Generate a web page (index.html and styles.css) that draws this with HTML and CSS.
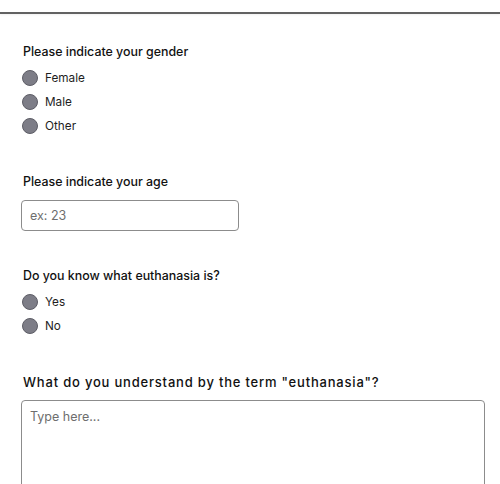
FILE: index.html
```html
<!DOCTYPE html>
<html>
<head>
<meta charset="utf-8">
<link rel="stylesheet" href="styles.css">
</head>
<body>
<div class="topbar"></div>
<form class="survey">
  <section class="question">
    <h2 class="q-title">Please indicate your gender</h2>
    <div class="options">
      <label class="option"><input type="radio" name="gender"><span>Female</span></label>
      <label class="option"><input type="radio" name="gender"><span>Male</span></label>
      <label class="option"><input type="radio" name="gender"><span>Other</span></label>
    </div>
  </section>
  <section class="question">
    <h2 class="q-title">Please indicate your age</h2>
    <input class="text-input" type="text" placeholder="ex: 23">
  </section>
  <section class="question">
    <h2 class="q-title">Do you know what euthanasia is?</h2>
    <div class="options">
      <label class="option"><input type="radio" name="know"><span>Yes</span></label>
      <label class="option"><input type="radio" name="know"><span>No</span></label>
    </div>
  </section>
  <section class="question">
    <h2 class="q-title q-title-wide">What do you understand by the term "euthanasia"?</h2>
    <textarea class="text-area" placeholder="Type here..."></textarea>
  </section>
</form>
</body>
</html>
```

FILE: styles.css
```css
html, body {
  margin: 0;
  padding: 0;
  background: #ffffff;
  font-family: Inter, "Liberation Sans", sans-serif;
  color: #161616;
}
.topbar {
  height: 12px;
  border-bottom: 2px solid #626262;
  box-shadow: 0 1px 2px rgba(0, 0, 0, 0.06);
}
.survey {
  display: flex;
  flex-direction: column;
  gap: 34px;
  padding: 28px 15px 0 21px;
}
.question {
  display: flex;
  flex-direction: column;
}
.q-title {
  margin: 0 0 0 2px;
  font-size: 12.4px;
  line-height: 20px;
  font-weight: 500;
  color: #111111;
}
.q-title-wide {
  font-size: 13px;
  letter-spacing: 0.8px;
}
.options {
  display: flex;
  flex-direction: column;
  margin-top: 4px;
}
.option {
  display: flex;
  align-items: center;
  gap: 7px;
  height: 24px;
  font-size: 11.75px;
  color: #1e1e1e;
  margin-left: 1px;
}
.option input {
  appearance: none;
  -webkit-appearance: none;
  margin: 0;
  width: 16px;
  height: 16px;
  border-radius: 50%;
  background: #7d7d87;
  border: 1px solid #5d5d66;
  box-sizing: border-box;
}
.text-input {
  margin-top: 8px;
  margin-bottom: 1px;
  width: 218px;
  height: 31px;
  box-sizing: border-box;
  border: 1px solid #8c8c8c;
  border-radius: 4px;
  padding: 0 8px;
  font-family: Inter, "Liberation Sans", sans-serif;
  font-size: 12.5px;
  color: #222;
}
.text-input::placeholder, .text-area::placeholder {
  color: #6e6e6e;
}
.text-area {
  margin-top: 8px;
  width: 464px;
  height: 140px;
  box-sizing: border-box;
  border: 1px solid #8c8c8c;
  border-radius: 4px;
  padding: 8px 8px;
  font-family: Inter, "Liberation Sans", sans-serif;
  font-size: 12.5px;
  resize: none;
}
```
